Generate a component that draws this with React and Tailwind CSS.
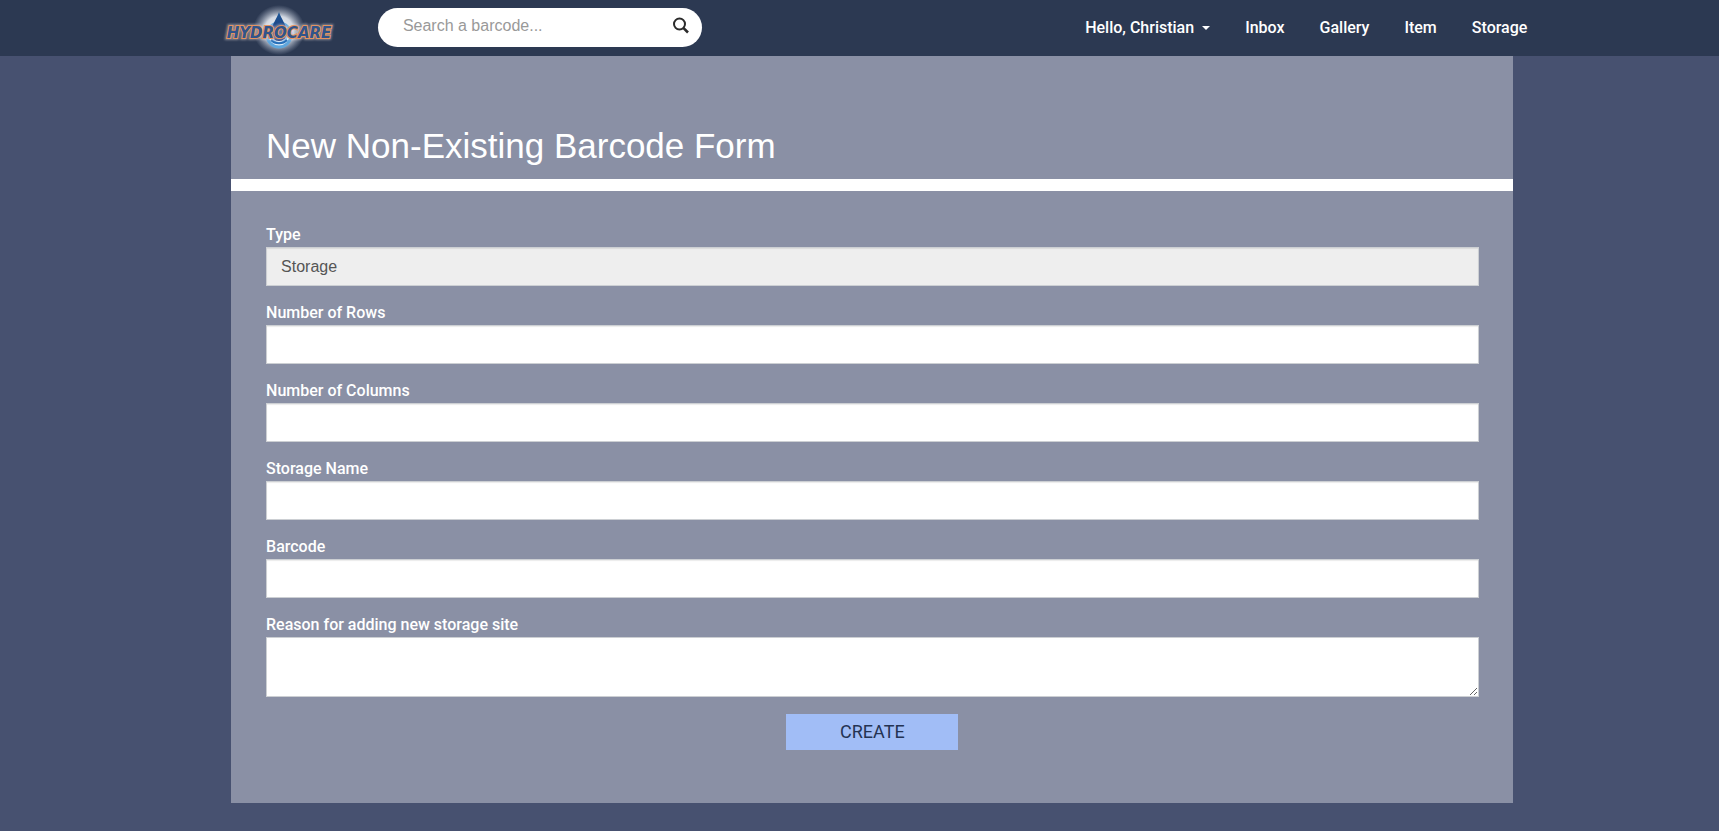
import React from "react";

const fields = [
  { id: "rows", label: "Number of Rows" },
  { id: "columns", label: "Number of Columns" },
  { id: "name", label: "Storage Name" },
  { id: "barcode", label: "Barcode" },
];

const links = ["Inbox", "Gallery", "Item", "Storage"];

function Logo() {
  return (
    <svg width="128" height="56" viewBox="0 0 128 56" role="img" aria-label="Hydrocare">
      <defs>
        <radialGradient id="halo">
          <stop offset="0" stopColor="#ffffff" />
          <stop offset="0.55" stopColor="#e4e9f1" stopOpacity="0.9" />
          <stop offset="1" stopColor="#a9b4c8" stopOpacity="0" />
        </radialGradient>
        <linearGradient id="drop" x1="0" y1="0" x2="0" y2="1">
          <stop offset="0" stopColor="#1d5797" />
          <stop offset="1" stopColor="#1c3274" />
        </linearGradient>
        <filter id="glow" x="-10%" y="-50%" width="120%" height="200%">
          <feGaussianBlur stdDeviation="1.2" />
        </filter>
      </defs>
      <ellipse cx="64" cy="30" rx="26" ry="25" fill="url(#halo)" />
      <circle cx="64" cy="35" r="12" fill="#dcebf8" stroke="#5fa6dc" strokeWidth="3" />
      <circle cx="64" cy="35" r="8" fill="none" stroke="#86b9e6" strokeWidth="2" />
      <path d="M64 12 C66 19 72 25 72 33 A8 8 0 0 1 56 33 C56 25 62 19 64 12 Z" fill="url(#drop)" />
      <path d="M56 40 A10 8 0 0 0 72 40" fill="none" stroke="#2770ba" strokeWidth="2" />
      <g fontFamily="'DejaVu Sans', sans-serif" fontSize="15" fontWeight="700" fontStyle="italic" textAnchor="middle">
        <text x="64" y="38" fill="none" stroke="#e9dfe0" strokeWidth="4" opacity="0.45" filter="url(#glow)" aria-hidden="true">HYDROCARE</text>
        <text x="64" y="38" fill="#31548a" stroke="#e5935f" strokeWidth="2" paintOrder="stroke">HYDROCARE</text>
      </g>
    </svg>
  );
}

const control =
  "block h-[39px] w-full border border-[#cccfd3] bg-white px-3.5 text-base text-[#555] shadow-[inset_0_1px_1px_rgba(0,0,0,0.08)] outline-none";

export default function App() {
  return (
    <div className="min-h-screen bg-[#475170] font-['Roboto','Liberation_Sans',sans-serif] text-base text-white">
      <header className="flex h-14 items-center bg-[#2c3952] pr-[11.15%] pl-[12.5%]">
        <a href="#" className="shrink-0">
          <Logo />
        </a>
        <form className="mb-px ml-[35px] flex h-[39px] w-[324px] shrink-0 items-center rounded-full bg-white pr-3 pb-1 pl-[25px]">
          <input
            type="search"
            aria-label="Search a barcode"
            placeholder="Search a barcode..."
            className="min-w-0 flex-1 bg-transparent font-['Liberation_Sans',Arial,sans-serif] text-base text-[#333] outline-none placeholder:text-[#999]"
          />
          <button type="submit" aria-label="Search" className="text-[#2b2b2b]">
            <svg width="18" height="18" viewBox="0 0 18 18" fill="none" stroke="currentColor">
              <circle cx="7.5" cy="7" r="5.5" strokeWidth="2" />
              <path d="M11.3 10.8 L16 15.5" strokeWidth="2.6" />
            </svg>
          </button>
        </form>
        <nav className="ml-auto flex items-center gap-[35px] font-medium">
          <button type="button" className="flex items-center gap-2">
            Hello, Christian
            <svg width="8" height="4" viewBox="0 0 8 4" fill="currentColor">
              <path d="M0 0 H8 L4 4 Z" />
            </svg>
          </button>
          {links.map((l) => (
            <a key={l} href="#">{l}</a>
          ))}
        </nav>
      </header>
      <main className="mr-[12%] ml-[13.44%] bg-[#8a90a5] pb-[53px]">
        <h1 className="border-b-12 border-white px-[35px] pt-[68px] pb-3 font-['Liberation_Sans',Arial,sans-serif] text-[35px] leading-[43px]">
          New Non-Existing Barcode Form
        </h1>
        <form className="flex flex-col pt-8 pr-[34px] pl-[35px]">
          <label htmlFor="type" className="font-medium leading-6">Type</label>
          <input id="type" type="text" value="Storage" disabled className={control + " mb-[15px] font-['Liberation_Sans',Arial,sans-serif] disabled:bg-[#eee]"} />
          {fields.map((f) => (
            <React.Fragment key={f.id}>
              <label htmlFor={f.id} className="font-medium leading-6">{f.label}</label>
              <input id={f.id} type="text" className={control + " mb-[15px]"} />
            </React.Fragment>
          ))}
          <label htmlFor="reason" className="font-medium leading-6">Reason for adding new storage site</label>
          <textarea
            id="reason"
            className="block h-[60px] w-full resize-y border border-[#cccfd3] bg-white px-3.5 py-2 text-[#555] outline-none"
          />
          <button type="submit" className="mt-[17px] h-9 w-[172px] self-center bg-[#a1bdf6] text-lg text-[#243352]">
            CREATE
          </button>
        </form>
      </main>
    </div>
  );
}
